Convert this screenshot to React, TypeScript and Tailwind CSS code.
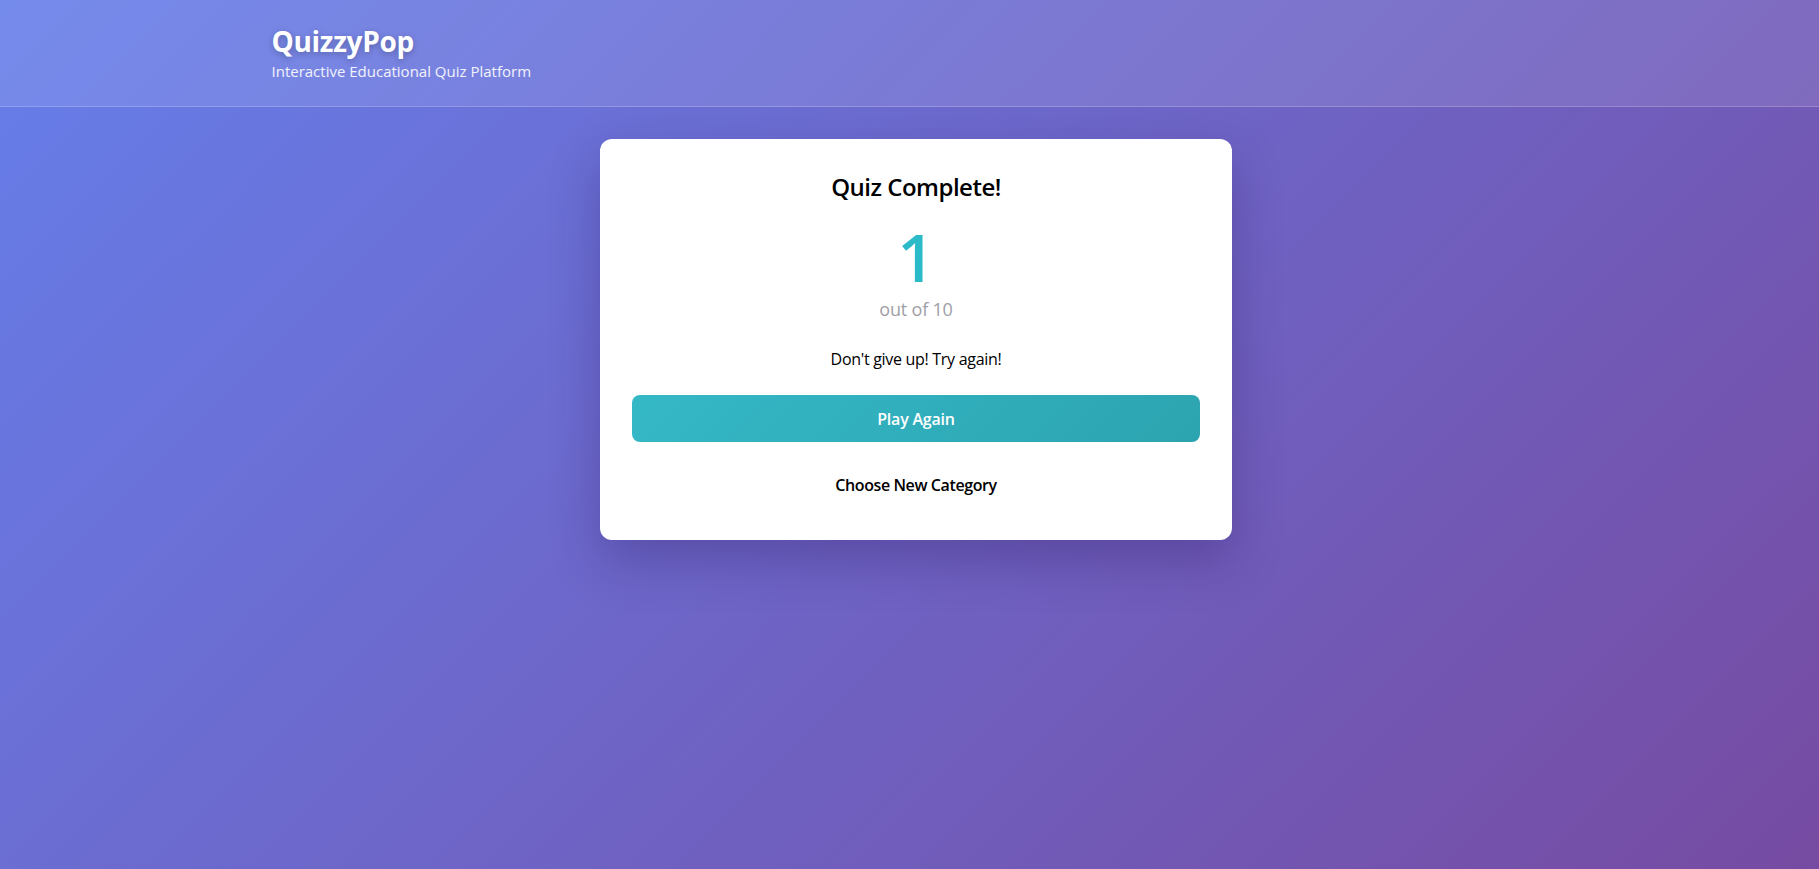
export default function App() {
  return (
    <div className="min-h-screen bg-linear-[135deg] from-[#667eea] to-[#764ba2] font-['Open_Sans',sans-serif]">
      {/* Header */}
      <header className="bg-white/10 border-b border-white/20">
        <div className="max-w-[1280px] mx-auto pl-[2px] pt-[23px] pb-[24px]">
          <h1 className="text-[28px] leading-[37px] font-bold text-white [text-shadow:0_2px_6px_rgba(0,0,0,0.25)] tracking-[-0.3px]">
            QuizzyPop
          </h1>
          <p className="text-[15px] leading-[22px] text-white/90">
            Interactive Educational Quiz Platform
          </p>
        </div>
      </header>

      {/* Results */}
      <main className="flex justify-center pt-[32px] pl-[13px]">
        <div className="w-[632px] bg-white rounded-[12px] p-[32px] text-center shadow-[0_20px_50px_rgba(40,20,90,0.3)]">
          <h2 className="text-[24px] leading-[32px] font-semibold text-black tracking-[-0.5px]">
            Quiz Complete!
          </h2>
          <div className="mt-[13px] text-[66px] leading-[80px] font-semibold text-[#2bbac8]">
            1
          </div>
          <div className="text-[18px] leading-[26px] text-[#a0a0a8] tracking-[-0.2px]">
            out of 10
          </div>
          <p className="mt-[25px] text-[16px] leading-[24px] text-black tracking-[-0.3px]">
            Don&apos;t give up! Try again!
          </p>
          <button className="mt-[24px] w-full h-[47px] rounded-[8px] bg-linear-[135deg] from-[#35b8c6] to-[#2ca4b0] text-white text-[16px] font-semibold tracking-[-0.2px]">
            Play Again
          </button>
          <button className="mt-[20px] w-full h-[46px] rounded-[8px] bg-transparent text-black text-[16px] font-semibold tracking-[-0.4px]">
            Choose New Category
          </button>
        </div>
      </main>
    </div>
  );
}
